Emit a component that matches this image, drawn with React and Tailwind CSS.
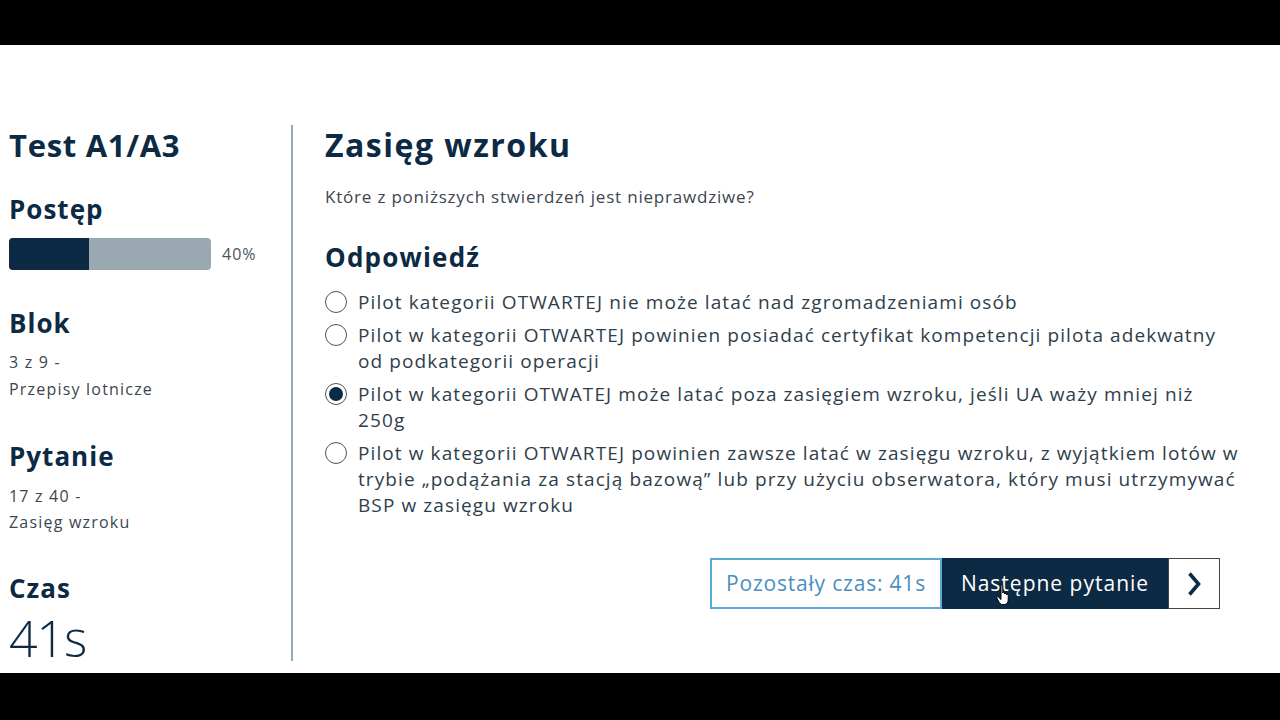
import React from "react";

const navy = "text-[#0c2a44]";

function Radio({ checked }) {
  return (
    <span className="mt-[2px] flex h-[22px] w-[22px] shrink-0 items-center justify-center rounded-full border-[1.5px] border-[#4b5560] bg-white">
      {checked && <span className="h-[14px] w-[14px] rounded-full bg-[#0c2a44]" />}
    </span>
  );
}

function Option({ checked, children }) {
  return (
    <div className="flex items-start gap-[11px]">
      <Radio checked={checked} />
      <div className="text-[19px] leading-[26px] tracking-[1.1px] text-[#2f3e4b] whitespace-nowrap">{children}</div>
    </div>
  );
}

export default function App() {
  return (
    <div className="flex h-[720px] w-[1280px] flex-col overflow-hidden bg-white font-['Open_Sans',sans-serif]">
      <div className="h-[45px] bg-black" />
      <div className="flex flex-1 pt-[80px]">
        <div className="flex h-[536px] w-[293px] shrink-0 flex-col border-r-2 border-[#86adc3] pl-[9px]">
          <div className={`text-[31px] font-bold leading-[40px] tracking-[0.7px] ${navy}`}>Test A1/A3</div>
          <div className={`mt-[28px] text-[26px] font-bold leading-[32px] tracking-[1px] ${navy}`}>Postęp</div>
          <div className="mt-[13px] flex items-center gap-[11px]">
            <div className="flex h-[32px] w-[202px] overflow-hidden rounded-[4px] bg-[#9aa8b1]">
              <div className="h-full w-[80px] bg-[#0c2a44]" />
            </div>
            <span className="text-[16px] tracking-[1px] text-[#4a5560]">40%</span>
          </div>
          <div className={`mt-[37px] text-[26px] font-bold leading-[32px] tracking-[1px] ${navy}`}>Blok</div>
          <div className="mt-[10px] text-[16px] leading-[27px] tracking-[1.2px] text-[#3b4650]">
            3 z 9 -<br />Przepisy lotnicze
          </div>
          <div className={`mt-[37px] text-[26px] font-bold leading-[32px] tracking-[1px] ${navy}`}>Pytanie</div>
          <div className="mt-[11px] text-[16px] leading-[26px] tracking-[1.2px] text-[#3b4650]">
            17 z 40 -<br />Zasięg wzroku
          </div>
          <div className={`mt-[37px] text-[26px] font-bold leading-[32px] tracking-[1px] ${navy}`}>Czas</div>
          <div className={`mt-[8px] text-[50px] font-light leading-[52px] tracking-[-1px] ${navy}`}>41s</div>
        </div>
        <div className="flex min-w-0 flex-1 flex-col pl-[32px] pr-[60px]">
          <div className={`text-[32px] font-bold leading-[40px] tracking-[1.5px] ${navy}`}>Zasięg wzroku</div>
          <div className="mt-[19px] text-[17px] leading-[26px] tracking-[0.8px] text-[#3b4650]">
            Które z poniższych stwierdzeń jest nieprawdziwe?
          </div>
          <div className={`mt-[31px] text-[26px] font-bold leading-[32px] tracking-[1.2px] ${navy}`}>Odpowiedź</div>
          <div className="mt-[16px] flex flex-col gap-[7px]">
            <Option>Pilot kategorii OTWARTEJ nie może latać nad zgromadzeniami osób</Option>
            <Option>
              Pilot w kategorii OTWARTEJ powinien posiadać certyfikat kompetencji pilota adekwatny
              <br />
              od podkategorii operacji
            </Option>
            <Option checked>
              Pilot w kategorii OTWATEJ może latać poza zasięgiem wzroku, jeśli UA waży mniej niż
              <br />
              250g
            </Option>
            <Option>
              Pilot w kategorii OTWARTEJ powinien zawsze latać w zasięgu wzroku, z wyjątkiem lotów w
              <br />
              trybie „podążania za stacją bazową” lub przy użyciu obserwatora, który musi utrzymywać
              <br />
              BSP w zasięgu wzroku
            </Option>
          </div>
          <div className="mt-[40px] flex justify-end">
            <div className="relative flex h-[51px]">
              <div className="flex w-[232px] items-center justify-center border-2 border-[#5aa9d6] text-[21px] tracking-[0.8px] text-[#4a8fc2]">
                Pozostały czas: 41s
              </div>
              <div className="flex w-[226px] items-center justify-center bg-[#0c2a44] text-[21px] tracking-[1px] text-white">
                Następne pytanie
              </div>
              <div className="flex w-[52px] items-center justify-center border border-[#3d4650] bg-white">
                <svg width="16" height="26" viewBox="0 0 16 26">
                  <path d="M3.5 2.5 L12.5 13 L3.5 23.5" fill="none" stroke="#0c2a44" strokeWidth="3.6" strokeLinejoin="miter" />
                </svg>
              </div>
              <svg className="absolute left-[286px] top-[26px]" width="18" height="22" viewBox="0 0 18 22">
                <path
                  d="M5 1.5 C5 0.7 6.8 0.7 6.8 1.5 L6.8 9 C6.8 8 8.6 8 8.6 9 L8.6 10 C8.6 9 10.4 9 10.4 10 L10.4 11 C10.4 10 12.2 10 12.2 11 L12.2 16 C12.2 18.5 10.8 20.5 8.5 20.5 L6.5 20.5 C4.8 20.5 3.8 19.5 2.8 17.8 L0.9 14 C0.4 13 1.6 12.2 2.4 13 L5 15.5 Z"
                  fill="white"
                  stroke="black"
                  strokeWidth="1"
                />
              </svg>
            </div>
          </div>
        </div>
      </div>
      <div className="h-[47px] bg-black" />
    </div>
  );
}
